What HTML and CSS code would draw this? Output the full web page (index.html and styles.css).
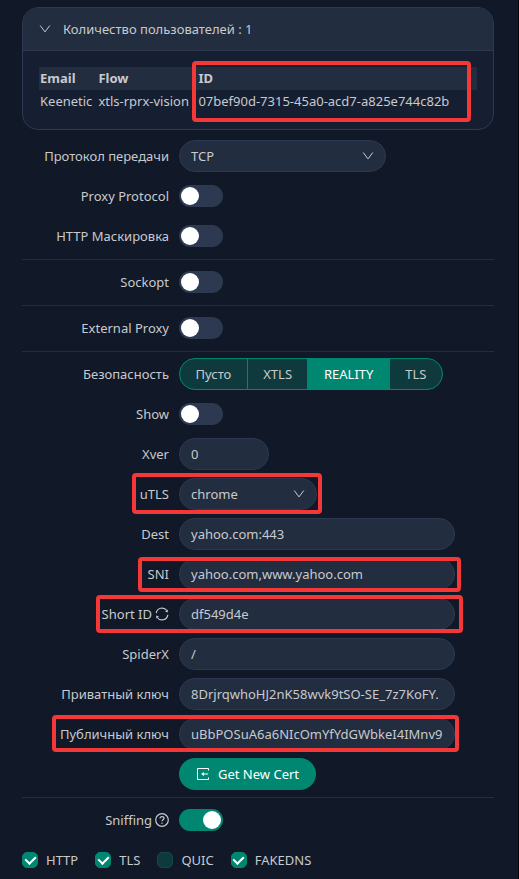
FILE: index.html
```html
<!DOCTYPE html>
<html lang="ru">
<head>
<meta charset="utf-8">
<meta name="viewport" content="width=device-width, initial-scale=1">
<title>Inbound</title>
<link rel="stylesheet" href="styles.css">
</head>
<body>
<main class="panel">
  <section class="collapse">
    <button class="collapse-header" type="button" aria-expanded="true">
      <svg class="chevron" viewBox="0 0 12 12" aria-hidden="true"><path d="M1.2 2.5 6 8.9l4.800-6.400"/></svg>
      <span>Количество пользователей : 1</span>
    </button>
    <div class="collapse-body">
      <table class="clients">
        <thead><tr><th>Email</th><th>Flow</th><th>ID</th></tr></thead>
        <tbody><tr><td>Keenetic</td><td>xtls-rprx-vision</td><td>07bef90d-7315-45a0-acd7-a825e744c82b</td></tr></tbody>
      </table>
      <span class="mark mark-id"></span>
    </div>
  </section>

  <form class="form">
    <div class="group">
      <div class="row">
        <label class="label" for="network">Протокол передачи</label>
        <div class="select select-wide">
          <select id="network"><option>TCP</option></select>
          <svg class="chevron" viewBox="0 0 12 12" aria-hidden="true"><path d="M1.2 2.500 6 8.900l4.800-6.400"/></svg>
        </div>
      </div>
      <div class="row">
        <label class="label" for="proxy">Proxy Protocol</label>
        <input class="switch" id="proxy" type="checkbox" role="switch">
      </div>
      <div class="row">
        <label class="label" for="mask">HTTP Маскировка</label>
        <input class="switch" id="mask" type="checkbox" role="switch">
      </div>
    </div>
    <hr class="divider">
    <div class="row">
      <label class="label" for="sockopt">Sockopt</label>
      <input class="switch" id="sockopt" type="checkbox" role="switch">
    </div>
    <hr class="divider">
    <div class="row">
      <label class="label" for="external">External Proxy</label>
      <input class="switch" id="external" type="checkbox" role="switch">
    </div>
    <hr class="divider">
    <div class="group">
      <div class="row">
        <span class="label" id="security">Безопасность</span>
        <div class="segments" role="radiogroup" aria-labelledby="security">
          <label class="segment"><input type="radio" name="security"><span>Пусто</span></label>
          <label class="segment"><input type="radio" name="security"><span>XTLS</span></label>
          <label class="segment"><input type="radio" name="security" checked><span>REALITY</span></label>
          <label class="segment"><input type="radio" name="security"><span>TLS</span></label>
        </div>
      </div>
      <div class="row">
        <label class="label" for="show">Show</label>
        <input class="switch" id="show" type="checkbox" role="switch">
      </div>
      <div class="row">
        <label class="label" for="xver">Xver</label>
        <input class="field field-number" id="xver" type="number" value="0">
      </div>
      <div class="row">
        <label class="label" for="utls">uTLS</label>
        <div class="select">
          <select id="utls"><option>chrome</option></select>
          <svg class="chevron" viewBox="0 0 12 12" aria-hidden="true"><path d="M1.2 2.500 6 8.900l4.800-6.400"/></svg>
        </div>
        <span class="mark mark-utls"></span>
      </div>
      <div class="row">
        <label class="label" for="dest">Dest</label>
        <input class="field" id="dest" type="text" value="yahoo.com:443">
      </div>
      <div class="row">
        <label class="label" for="sni">SNI</label>
        <input class="field" id="sni" type="text" value="yahoo.com,www.yahoo.com">
        <span class="mark mark-sni"></span>
      </div>
      <div class="row">
        <label class="label" for="shortid">Short ID
          <svg class="icon" viewBox="0 0 14 14" aria-hidden="true"><path d="M1.200 6.200a5.900 5.900 0 0 1 10.600-2.700M12.800 7.800a5.900 5.900 0 0 1-10.600 2.700"/><path class="solid" d="m12.700 2.400.1 3-2.800-.8zM1.300 11.600l-.1-3 2.800.8z"/></svg>
        </label>
        <input class="field" id="shortid" type="text" value="df549d4e">
        <span class="mark mark-short"></span>
      </div>
      <div class="row">
        <label class="label" for="spider">SpiderX</label>
        <input class="field" id="spider" type="text" value="/">
      </div>
      <div class="row">
        <label class="label" for="private">Приватный ключ</label>
        <input class="field" id="private" type="text" value="8DrjrqwhoHJ2nK58wvk9tSO-SE_7z7KoFY.">
      </div>
      <div class="row">
        <label class="label" for="public">Публичный ключ</label>
        <input class="field" id="public" type="text" value="uBbPOSuA6a6NIcOmYfYdGWbkeI4IMnv9">
        <span class="mark mark-public"></span>
      </div>
      <div class="row">
        <span class="label"></span>
        <button class="primary" type="button">
          <svg class="icon icon-thin" viewBox="0 0 14 14" aria-hidden="true"><path d="M12.500 3.500v-2h-11v11h11v-2M7 7h5"/><path class="solid" d="M5 7l3-2v4z"/></svg>
          <span>Get New Cert</span>
        </button>
      </div>
    </div>
    <hr class="divider">
    <div class="row">
      <label class="label" for="sniffing">Sniffing
        <svg class="icon" viewBox="0 0 14 14" aria-hidden="true"><circle cx="7" cy="7" r="6.300"/><path d="M5 5.600C5 4.300 5.900 3.600 7 3.600s2 .7 2 1.800C9 6.800 7 6.900 7 8.300"/><circle class="solid" cx="7" cy="10.200" r=".7"/></svg>
      </label>
      <input class="switch" id="sniffing" type="checkbox" role="switch" checked>
    </div>
    <div class="checks">
      <label class="check"><input type="checkbox" checked><span>HTTP</span></label>
      <label class="check"><input type="checkbox" checked><span>TLS</span></label>
      <label class="check"><input type="checkbox"><span>QUIC</span></label>
      <label class="check"><input type="checkbox" checked><span>FAKEDNS</span></label>
    </div>
  </form>
</main>
</body>
</html>
```
FILE: styles.css
```css
:root {
  --bg: #111827;
  --surface: #222d40;
  --line: #2c3950;
  --text: #c8cace;
  --green: #008771;
  --green-dark: #0e3a3e;
  --mark: #f43737;
}

* { box-sizing: border-box; }

body {
  margin: 0;
  background: #05080f;
  color: var(--text);
  font: 13px/22px "Noto Sans", "Open Sans", sans-serif;
}

button, input, select { font: inherit; color: inherit; margin: 0; }

.panel {
  margin-right: 1px;
  padding: 7px 24px 8px 22px;
  background: var(--bg);
}

.collapse {
  border: 1px solid var(--line);
  border-radius: 16px;
  background: #151f31;
}

.collapse-header {
  display: flex;
  align-items: center;
  gap: 12px;
  width: 100%;
  height: 43px;
  padding: 0 16px;
  border: 0;
  border-bottom: 1px solid var(--line);
  border-radius: 15px 15px 0 0;
  background: var(--surface);
}

.collapse-body { position: relative; padding: 16px; }

.chevron {
  width: 12px;
  height: 12px;
  fill: none;
  stroke: currentColor;
  stroke-width: 1;
}

.clients { width: 100%; border-spacing: 0; line-height: 23px; }
.clients th, .clients td { padding: 0 5px 0 1px; text-align: left; white-space: nowrap; }
.clients th:nth-child(2) { min-width: 100px; }
.clients th:last-child { width: 100%; }
.clients thead { background: var(--surface); }

.form { margin-top: 10px; }
.group { display: flex; flex-direction: column; gap: 8px; }

.row {
  position: relative;
  display: flex;
  align-items: center;
  height: 32px;
}

.label {
  display: flex;
  flex: 0 0 157px;
  align-items: center;
  justify-content: flex-end;
  gap: 3px;
  padding-right: 10px;
  white-space: nowrap;
}

.icon {
  width: 14px;
  height: 14px;
  fill: none;
  stroke: currentColor;
  stroke-width: 1.2;
}
.icon-thin { stroke-width: 1; }
.solid { fill: currentColor; stroke: none; }

.divider {
  height: 1px;
  margin: 7px 0 6px;
  border: 0;
  background: #222d3f;
}

.switch {
  display: flex;
  width: 44px;
  height: 22px;
  padding: 2px;
  border-radius: 11px;
  appearance: none;
  background: var(--line);
}
.switch::before {
  content: "";
  width: 18px;
  height: 18px;
  border-radius: 50%;
  background: #fff;
}
.switch:checked { justify-content: flex-end; background: var(--green); }

.field, .select select {
  width: 276px;
  height: 32px;
  padding: 0 11px;
  border: 1px solid var(--line);
  border-radius: 16px;
  background: var(--surface);
}
.field-number { width: 90px; appearance: textfield; }
.field-number::-webkit-inner-spin-button { appearance: none; }

.select { position: relative; width: 138px; }
.select-wide { width: 207px; }
.select select { width: 100%; appearance: none; }
.select .chevron {
  position: absolute;
  top: 10px;
  right: 12px;
  pointer-events: none;
}

.segments {
  display: flex;
  width: 264px;
  height: 32px;
  overflow: hidden;
  border: 1px solid var(--green);
  border-radius: 16px;
  background: var(--green-dark);
}
.segment { flex: auto; padding: 4px 14px; text-align: center; }
.segment + .segment { border-left: 1px solid var(--green); }
.segment input, .check input { appearance: none; }
.segment input { position: absolute; }
.segment:has(:checked) { background: var(--green); color: #fff; }

.primary {
  display: flex;
  align-items: center;
  gap: 8px;
  height: 32px;
  padding: 0 17px;
  border: 0;
  border-radius: 16px;
  background: var(--green);
  color: #fff;
}

.checks { display: flex; gap: 17px; margin-top: 13px; }
.check { display: flex; align-items: center; gap: 8px; }
.check input {
  display: grid;
  place-items: center;
  width: 16px;
  height: 16px;
  border: 1px solid #0d4a49;
  border-radius: 5px;
  background: var(--green-dark);
}
.check input:checked { border-color: var(--green); background: var(--green); }
.check input:checked::before {
  content: "";
  width: 5px;
  height: 8px;
  margin-bottom: 2px;
  border: solid #fff;
  border-width: 0 2px 2px 0;
  transform: rotate(45deg);
}

.mark {
  position: absolute;
  border: 4px solid var(--mark);
  border-radius: 4px;
  pointer-events: none;
}
.mark-id { left: 169px; right: 22px; top: 10px; height: 61px; }
.mark-utls { left: 110px; width: 190px; top: -5px; height: 41px; }
.mark-sni { left: 116px; width: 323px; top: -1px; height: 35px; }
.mark-short { left: 74px; width: 367px; top: -3px; height: 38px; }
.mark-public { left: 30px; width: 407px; top: -3px; height: 37px; }
```
